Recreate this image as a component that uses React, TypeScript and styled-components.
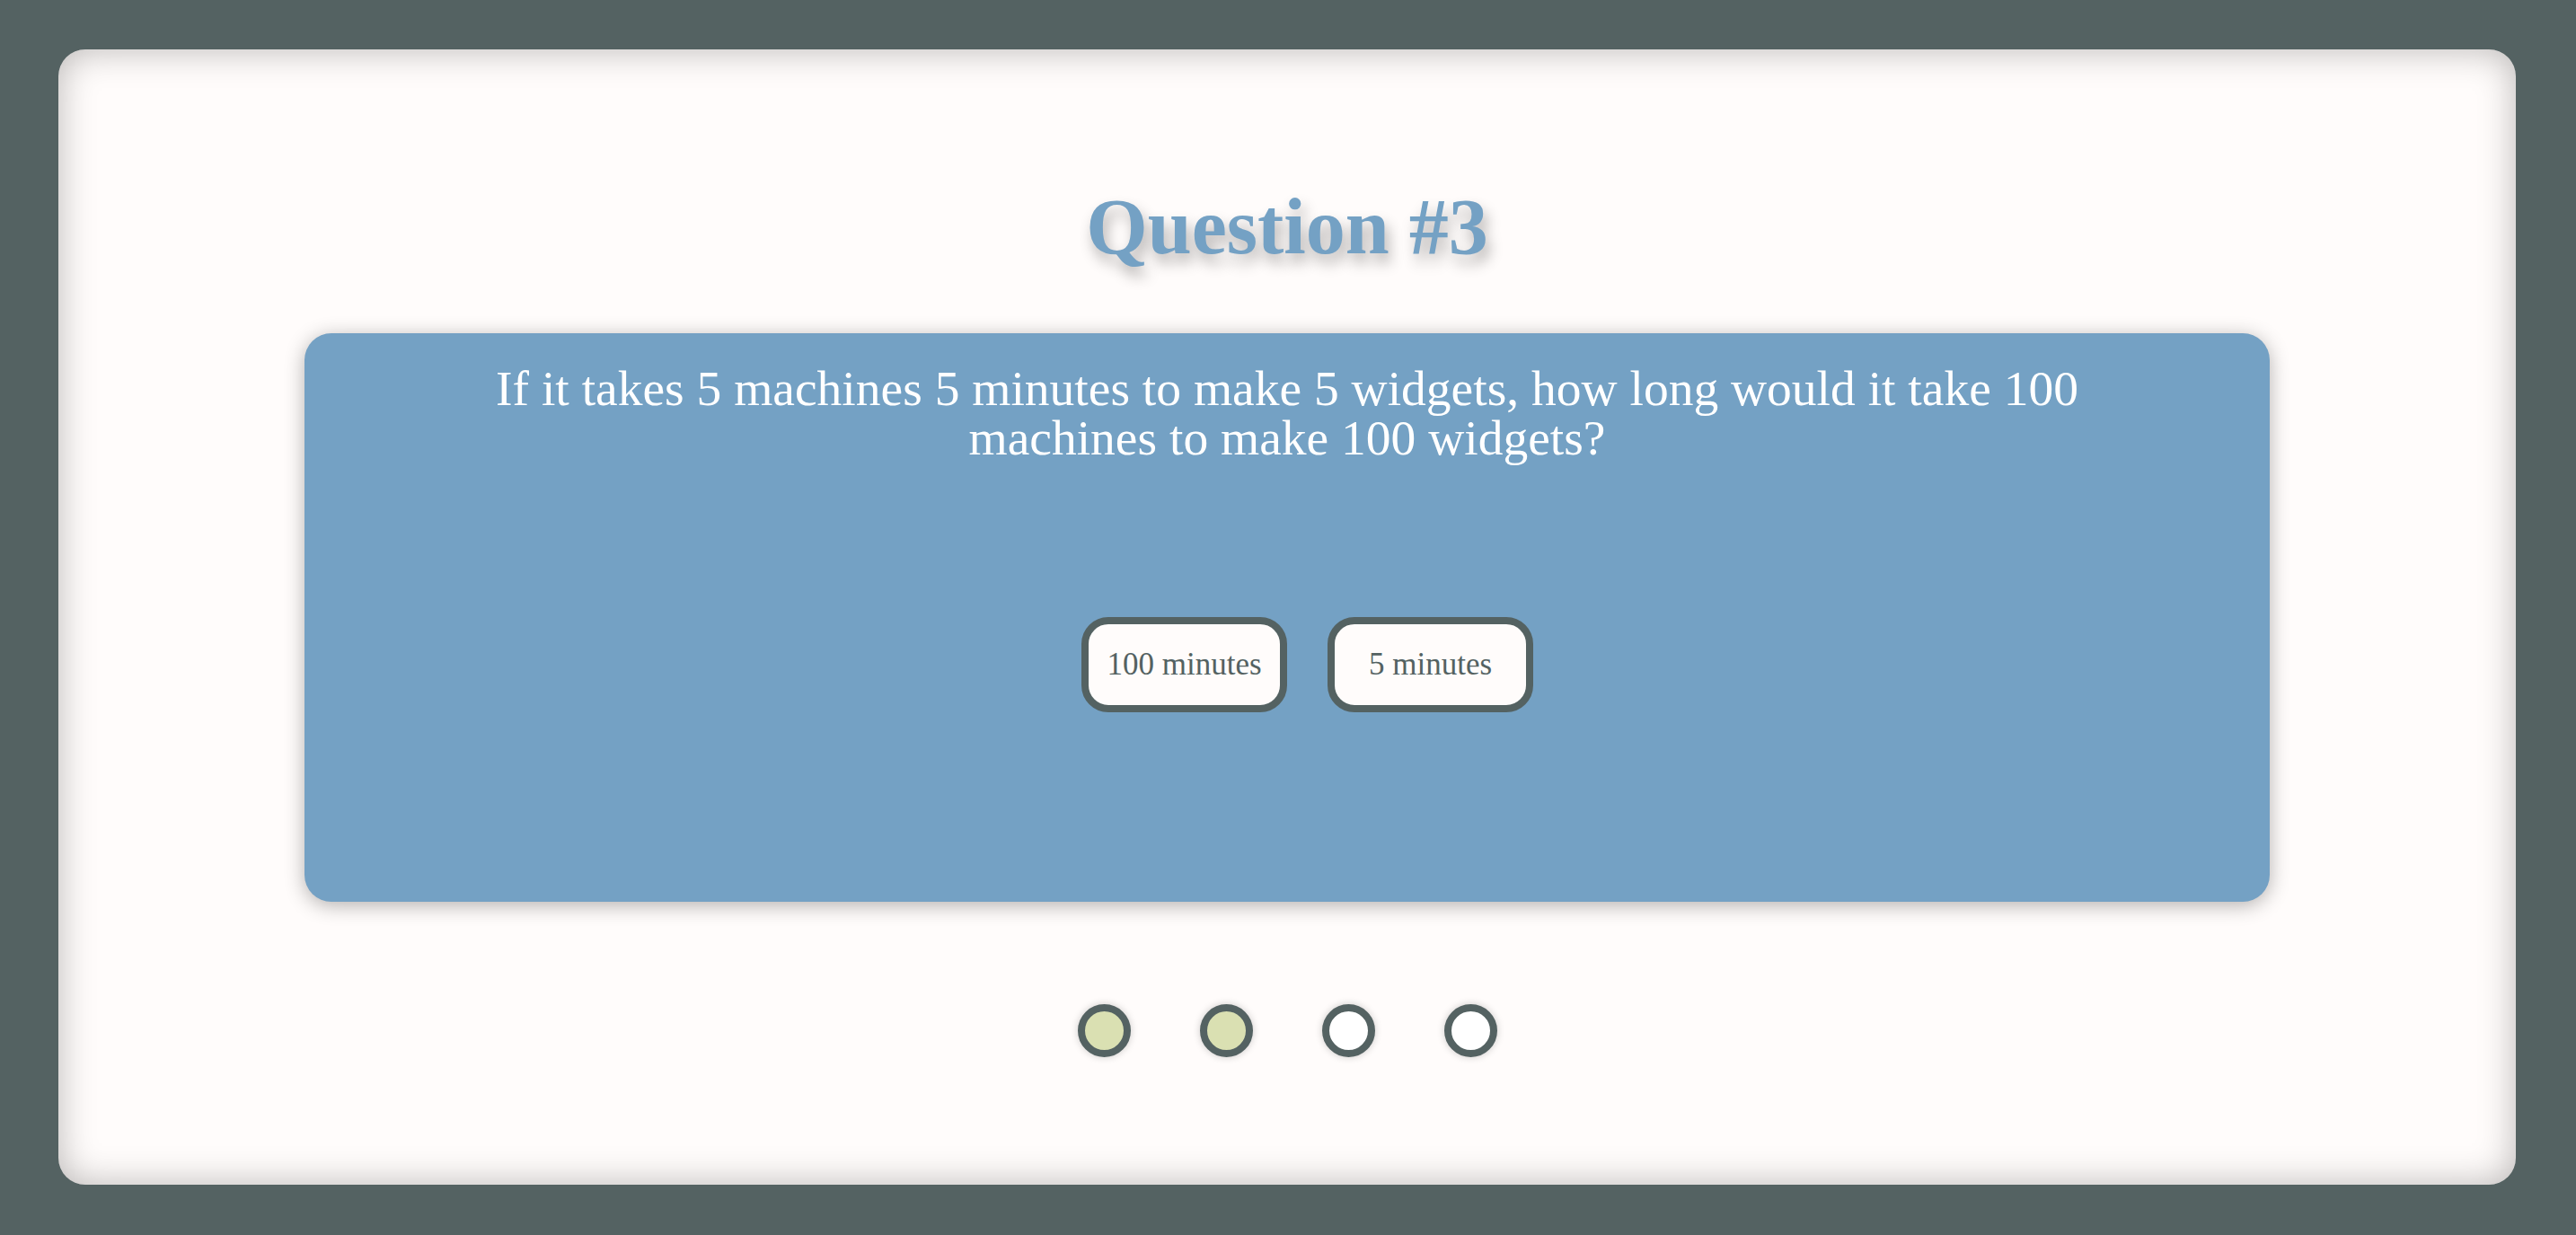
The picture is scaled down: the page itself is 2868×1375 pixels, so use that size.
import React from 'react';
import styled, { createGlobalStyle } from 'styled-components';

const answers = ['100 minutes', '5 minutes'];
const progress = [true, true, false, false];

export default function App() {
  return (
    <>
      <GlobalStyle />
      <Page>
        <Card>
          <Title>Question #3</Title>
          <QuestionPanel>
            <QuestionText>
              If it takes 5 machines 5 minutes to make 5 widgets, how long would it take 100 machines to make 100
              widgets?
            </QuestionText>
            <Answers>
              {answers.map((a) => (
                <AnswerButton key={a}>{a}</AnswerButton>
              ))}
            </Answers>
          </QuestionPanel>
          <Dots>
            {progress.map((done, i) => (
              <Dot key={i} $done={done} />
            ))}
          </Dots>
        </Card>
      </Page>
    </>
  );
}

const GlobalStyle = createGlobalStyle`
  html, body {
    margin: 0;
    padding: 0;
    background: #546262;
    font-family: "Liberation Serif", "Times New Roman", serif;
  }
`;

const Page = styled.div`
  width: 2868px;
  height: 1375px;
  box-sizing: border-box;
  padding: 55px 67px 56px 65px;
  background: #546262;
`;

const Card = styled.div`
  height: 100%;
  box-sizing: border-box;
  padding-top: 149px;
  background: #fffcfb;
  border-radius: 30px;
  box-shadow: inset 0 0 40px rgba(0, 0, 0, 0.28);
  display: flex;
  flex-direction: column;
  align-items: center;
`;

const Title = styled.h1`
  margin: 0;
  font-size: 88px;
  line-height: 97px;
  font-weight: bold;
  color: #74a1c4;
  text-shadow: 4px 10px 16px rgba(0, 0, 0, 0.3);
`;

const QuestionPanel = styled.div`
  margin-top: 70px;
  width: 2188px;
  height: 633px;
  box-sizing: border-box;
  padding: 34px 160px 0;
  background: #74a1c4;
  border-radius: 30px;
  box-shadow: 0 4px 22px rgba(0, 0, 0, 0.3);
  display: flex;
  flex-direction: column;
  align-items: center;
`;

const QuestionText = styled.p`
  margin: 0;
  font-size: 55.5px;
  line-height: 55px;
  color: #ffffff;
  text-align: center;
`;

const Answers = styled.div`
  margin-top: 172px;
  display: flex;
  justify-content: center;
`;

const AnswerButton = styled.button`
  margin-left: 45px;
  width: 229px;
  height: 106px;
  box-sizing: border-box;
  border: 8px solid #546262;
  border-radius: 30px;
  background: #fffcfb;
  color: #546262;
  font-family: "Liberation Serif", "Times New Roman", serif;
  font-size: 35px;
  padding: 0;
  cursor: pointer;
`;

const Dots = styled.div`
  margin-top: 114px;
  display: flex;
  gap: 77px;
`;

const Dot = styled.div<{ $done: boolean }>`
  width: 59px;
  height: 59px;
  box-sizing: border-box;
  border-radius: 50%;
  border: 8px solid #546262;
  background: ${(p) => (p.$done ? '#dae0b2' : '#ffffff')};
  box-shadow: 0 0 8px rgba(0, 0, 0, 0.2);
`;
